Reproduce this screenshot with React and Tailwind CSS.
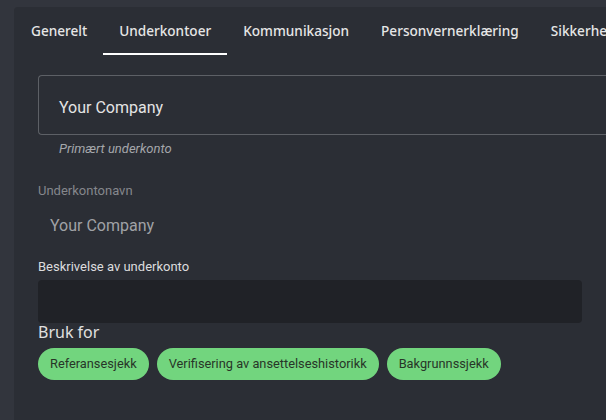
const tabs = ['Generelt', 'Underkontoer', 'Kommunikasjon', 'Personvernerklæring', 'Sikkerhet'];
const uses = ['Referansesjekk', 'Verifisering av ansettelseshistorikk', 'Bakgrunnssjekk'];

export default function App() {
  return (
    <div className="h-[420px] w-[606px] overflow-hidden bg-[#32353d] pl-[14px] pt-[7px] font-['Roboto',sans-serif]">
      <div className="h-full overflow-hidden rounded-tl-[4px] bg-[#2b2e35]">
        {/* tabs */}
        <div className="flex whitespace-nowrap pl-px font-['Noto_Sans',sans-serif] text-[13.6px] font-medium text-[#e6e6e6]">
          {tabs.map((t, i) => (
            <div key={t} className={'flex h-[48px] items-center px-4 pt-[2px] ' + (i === 1 ? 'border-b-2 border-white' : 'border-b-2 border-transparent')}>
              {t}
            </div>
          ))}
        </div>

        <div className="pl-6 pt-[20px]">
          <div className="flex h-[60px] items-center rounded-l-[4px] border border-r-0 border-[#5d6066] pl-5 pt-[5px] text-[16px] text-[#e4e4e4]">
            Your Company
          </div>
          <p className="mt-[4px] pl-[21px] text-[13px] italic text-[#a5a7ab]">Primært underkonto</p>

          <p className="mt-[22px] text-[13px] text-[#85878c]">Underkontonavn</p>
          <p className="mt-[14px] pl-3 text-[16px] text-[#a0a2a6]">Your Company</p>

          <p className="mt-[19px] text-[13px] text-[#dcdcde]">Beskrivelse av underkonto</p>
          <div className="mt-[3px] h-[43px] w-[544px] rounded-[4px] bg-[#202227]" />

          <p className="font-['Noto_Sans',sans-serif] text-[16px] leading-[18px] text-[#e0e0e0]">Bruk for</p>
          <div className="mt-[7px] flex gap-2">
            {uses.map((u) => (
              <span key={u} className="flex h-[32px] items-center rounded-full bg-[#72d57e] px-3 text-[12.8px] text-[#283528]">
                {u}
              </span>
            ))}
          </div>
        </div>
      </div>
    </div>
  );
}
